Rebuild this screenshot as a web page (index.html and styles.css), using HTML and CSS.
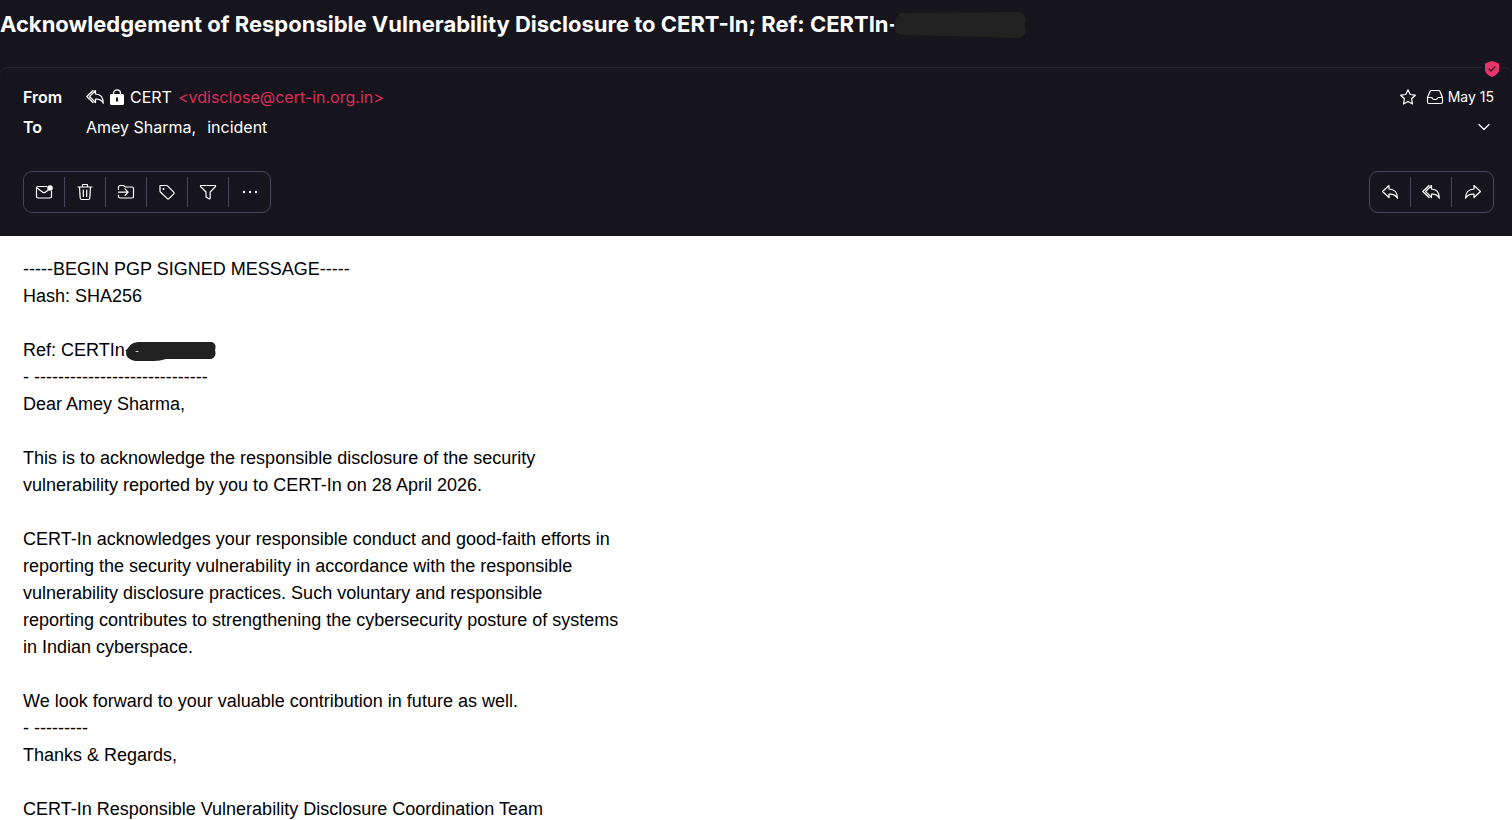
FILE: index.html
```html
<!DOCTYPE html>
<html lang="en">
<head>
  <meta charset="UTF-8">
  <meta name="viewport" content="width=device-width, initial-scale=1.0">
  <title>Acknowledgement of Responsible Vulnerability Disclosure</title>
  <link rel="stylesheet" href="styles.css">
</head>
<body>
  <!-- shared reply arrows -->
  <svg class="sprite" aria-hidden="true">
    <symbol id="i-reply" viewBox="0 0 18 18">
      <path d="M8 2.500 1.500 8.500 8 14.500V11.200c3.500-.4 6.500.8 8.500 4C16.500 9.500 13 6.200 8 6z"/>
    </symbol>
    <symbol id="i-reply-all" viewBox="1 0 18 18">
      <path d="M10.500 2.500 4.500 8.500l6 6V11.200c3.500-.4 6 .8 7.800 4C18.300 9.500 15.500 6.200 10.500 6z"/>
      <path d="M8 2.500 1.800 8.500 8 14.500"/>
    </symbol>
  </svg>

  <div class="mail">
    <h1 class="subject">Acknowledgement of Responsible Vulnerability Disclosure to CERT-In; Ref: CERTIn-<svg class="redact-title" viewBox="0 0 134 28" aria-hidden="true">
      <path d="M9 3 125 2q8 1 8 8-2 4 0 9 0 8-8 9L9 25q-8-1-8-10Q2 5 9 3z"/>
    </svg></h1>

    <header class="header">
      <svg class="shield" viewBox="0 0 14 16" aria-hidden="true">
        <path class="shield-bg" d="M7 0 13 2q1 .3 1 1.300V9q0 4-7 7Q0 13 0 9V3.300Q0 2.300 1 2z"/>
        <path class="shield-tick" d="m4 8 2 2 4-4.200"/>
      </svg>

      <div class="row">
        <div class="label">From</div>
        <div class="sender">
          <svg class="icon"><use href="#i-reply-all"/></svg>
          <svg class="lock" viewBox="0 0 14 16">
            <path class="lock-ring" d="M3.500 7V4.300a3.500 3.500 0 0 1 7 0V7"/>
            <rect x="0" y="5" width="14" height="11" rx="1.500"/>
            <path class="lock-hole" d="M7 8.500v4"/>
          </svg>
          <span>CERT</span>
          <a class="address" href="#">&lt;vdisclose@cert-in.org.in&gt;</a>
        </div>
        <div class="meta">
          <svg class="icon icon-star" viewBox="0 0 18 18"><path d="m9 1.800 2.200 4.700 5.100.7-3.700 3.600.9 5.100L9 13.400l-4.500 2.500.9-5.100L1.700 7.200l5.100-.7z"/></svg>
          <svg class="icon" viewBox="0 0 18 18"><path d="M1.500 9.500 4 3.500q.4-1 1.400-1h7.200q1 0 1.400 1l2.500 6V14q0 1.500-1.500 1.500H3q-1.500 0-1.500-1.500zh4q.5 0 .7.600.6 1.400 1.800 1.400h2q1.200 0 1.800-1.400.2-.6.7-.6h4"/></svg>
          <span class="date">May 15</span>
        </div>
      </div>

      <div class="row">
        <div class="label">To</div>
        <div class="recipients"><span>Amey Sharma,</span><span>incident</span></div>
        <button class="expand" aria-label="Show details">
          <svg viewBox="0 0 12 8"><path d="m1 1.500 5 5 5-5"/></svg>
        </button>
      </div>

      <div class="actions">
        <div class="toolbar">
          <button aria-label="Mark as unread">
            <svg class="icon" viewBox="0 0 18 18"><path d="M11.500 3.500H3Q1.500 3.500 1.500 5v8.500Q1.500 15 3 15h12q1.500 0 1.500-1.500V8M2 5l5.800 4.300q1.200.9 2.400 0L13 7.200"/><circle class="solid" cx="15" cy="5" r="2.800"/></svg>
          </button>
          <button aria-label="Delete">
            <svg class="icon" viewBox="0 0 18 18"><path d="M2 4h14M6.500 4V2q0-.5.5-.5h4q.5 0 .5.500v2M3.500 4l.7 11q.1 1.500 1.600 1.500h6.400q1.500 0 1.600-1.500l.7-11M7.300 7v6.500M10.700 7v6.500"/></svg>
          </button>
          <button aria-label="Move to">
            <svg class="icon" viewBox="0 0 18 18"><path d="M1.500 6.500V4Q1.500 2.500 3 2.500h3.500l2 1.500H15q1.500 0 1.500 1.500v8Q16.500 15 15 15H3q-1.500 0-1.500-1.500V12M1.500 9.200H11M8 6l3.200 3.200L8 12.400"/></svg>
          </button>
          <button aria-label="Label as">
            <svg class="icon" viewBox="0 0 18 18"><path d="M2 2.500h6.500q.6 0 1 .4l6.300 6.300q.8.800 0 1.600l-4.900 4.900q-.8.800-1.600 0L2.400 9Q2 8.600 2 8z"/><circle class="solid" cx="5.500" cy="6" r="1"/></svg>
          </button>
          <button aria-label="Filter">
            <svg class="icon" viewBox="0 0 18 18"><path d="M1.500 2.500h15q.3.500 0 1L11.200 9v6.200q0 .8-.8.800L7 14V9L1.500 3.500z"/></svg>
          </button>
          <button aria-label="More">
            <svg class="icon" viewBox="0 0 18 18"><g class="solid"><circle cx="3" cy="9" r="1.200"/><circle cx="9" cy="9" r="1.200"/><circle cx="15" cy="9" r="1.200"/></g></svg>
          </button>
        </div>

        <div class="toolbar">
          <button aria-label="Reply"><svg class="icon"><use href="#i-reply"/></svg></button>
          <button aria-label="Reply all"><svg class="icon"><use href="#i-reply-all"/></svg></button>
          <button aria-label="Forward"><svg class="icon flip"><use href="#i-reply"/></svg></button>
        </div>
      </div>
    </header>

    <main class="message">-----BEGIN PGP SIGNED MESSAGE-----
Hash: SHA256

Ref: CERTIn-<svg class="redact-ref" viewBox="0 0 90 20" aria-hidden="true"><path d="M12 1h74q5 2 3 8 2 7-4 9H40q-6 2-12 2H9Q0 18 0 12 2 2 12 1z"/><path class="speck" d="M10 10.500h2"/></svg>
- -----------------------------
Dear Amey Sharma,

This is to acknowledge the responsible disclosure of the security
vulnerability reported by you to CERT-In on 28 April 2026.

CERT-In acknowledges your responsible conduct and good-faith efforts in
reporting the security vulnerability in accordance with the responsible
vulnerability disclosure practices. Such voluntary and responsible
reporting contributes to strengthening the cybersecurity posture of systems
in Indian cyberspace.

We look forward to your valuable contribution in future as well.
- ---------
Thanks &amp; Regards,

CERT-In Responsible Vulnerability Disclosure Coordination Team</main>
  </div>
</body>
</html>
```

FILE: styles.css
```css
* {
  box-sizing: border-box;
}
body {
  margin: 0;
  background-color: #16141c;
  color: #fff;
  font-family: Inter, "Liberation Sans", sans-serif;
  font-size: 16px;
  line-height: 24px;
}
.sprite {
  display: none;
}
svg {
  display: block;
  flex: none;
  fill: none;
  stroke: #fff;
  stroke-width: 1.2;
  stroke-linejoin: round;
  stroke-linecap: round;
}

.mail {
  display: flex;
  flex-direction: column;
  height: 100vh;
  overflow: hidden;
}
.subject {
  display: flex;
  align-items: center;
  margin: 0;
  padding: 8px 0 27px;
  font-size: 22px;
  line-height: 32px;
  font-weight: 700;
  white-space: nowrap;
}
.redact-title {
  width: 134px;
  height: 28px;
  margin-left: -6px;
  fill: #212121;
  stroke: none;
}

.header {
  position: relative;
  flex: none;
  padding: 17px 18px 23px 23px;
  border-top: 1px solid #292733;
  border-radius: 8px 8px 0 0;
}
.shield {
  position: absolute;
  top: -7px;
  right: 13px;
  width: 14px;
  height: 16px;
  background-color: #16141c;
  box-shadow: 0 0 0 3px #16141c;
}
.shield-bg {
  fill: #e8336b;
  stroke: none;
}
.shield-tick {
  stroke: #16141c;
}
.row {
  display: flex;
  align-items: center;
  height: 24px;
  margin-bottom: 6px;
}
.label {
  width: 63px;
  font-weight: 600;
}
.sender {
  display: flex;
  align-items: center;
  gap: 6px;
}
.address {
  color: #dc2d5b;
  text-decoration: none;
}
.lock {
  width: 14px;
  height: 16px;
}
.lock rect {
  fill: #fff;
  stroke: none;
}
.lock-hole {
  stroke: #16141c;
  stroke-width: 2;
  stroke-linecap: butt;
}
.meta {
  display: flex;
  align-items: center;
  gap: 4px;
  margin-left: auto;
}
.icon-star {
  margin-right: 5px;
}
.date {
  font-size: 14px;
}
.recipients {
  display: flex;
  gap: 11px;
}
.expand {
  margin-left: auto;
  padding: 4px;
  border: none;
  background: none;
}
.expand svg {
  width: 12px;
  height: 8px;
}

.icon {
  width: 18px;
  height: 18px;
}
.flip {
  transform: scaleX(-1);
}
.solid {
  fill: #fff;
  stroke: none;
}
.actions {
  display: flex;
  justify-content: space-between;
  margin-top: 32px;
}
.actions .toolbar {
  display: flex;
  align-items: center;
  height: 42px;
  border: 1px solid #44445a;
  border-radius: 9px;
}
.toolbar button {
  display: flex;
  align-items: center;
  justify-content: center;
  width: 41px;
  height: 30px;
  padding: 0;
  border: none;
  border-right: 1px solid #44445a;
  background: none;
}
.toolbar button:last-child {
  border-right: none;
}

.message {
  flex: 1;
  padding: 20px 23px 0;
  background-color: #fff;
  color: #000;
  font-family: "Liberation Sans", Arial, sans-serif;
  font-size: 18px;
  line-height: 27px;
  white-space: pre-wrap;
}
.redact-ref {
  display: inline-block;
  width: 90px;
  height: 20px;
  margin-left: -5px;
  vertical-align: middle;
  fill: #212121;
  stroke: none;
}
.redact-ref .speck {
  stroke: #ccc;
}
```
